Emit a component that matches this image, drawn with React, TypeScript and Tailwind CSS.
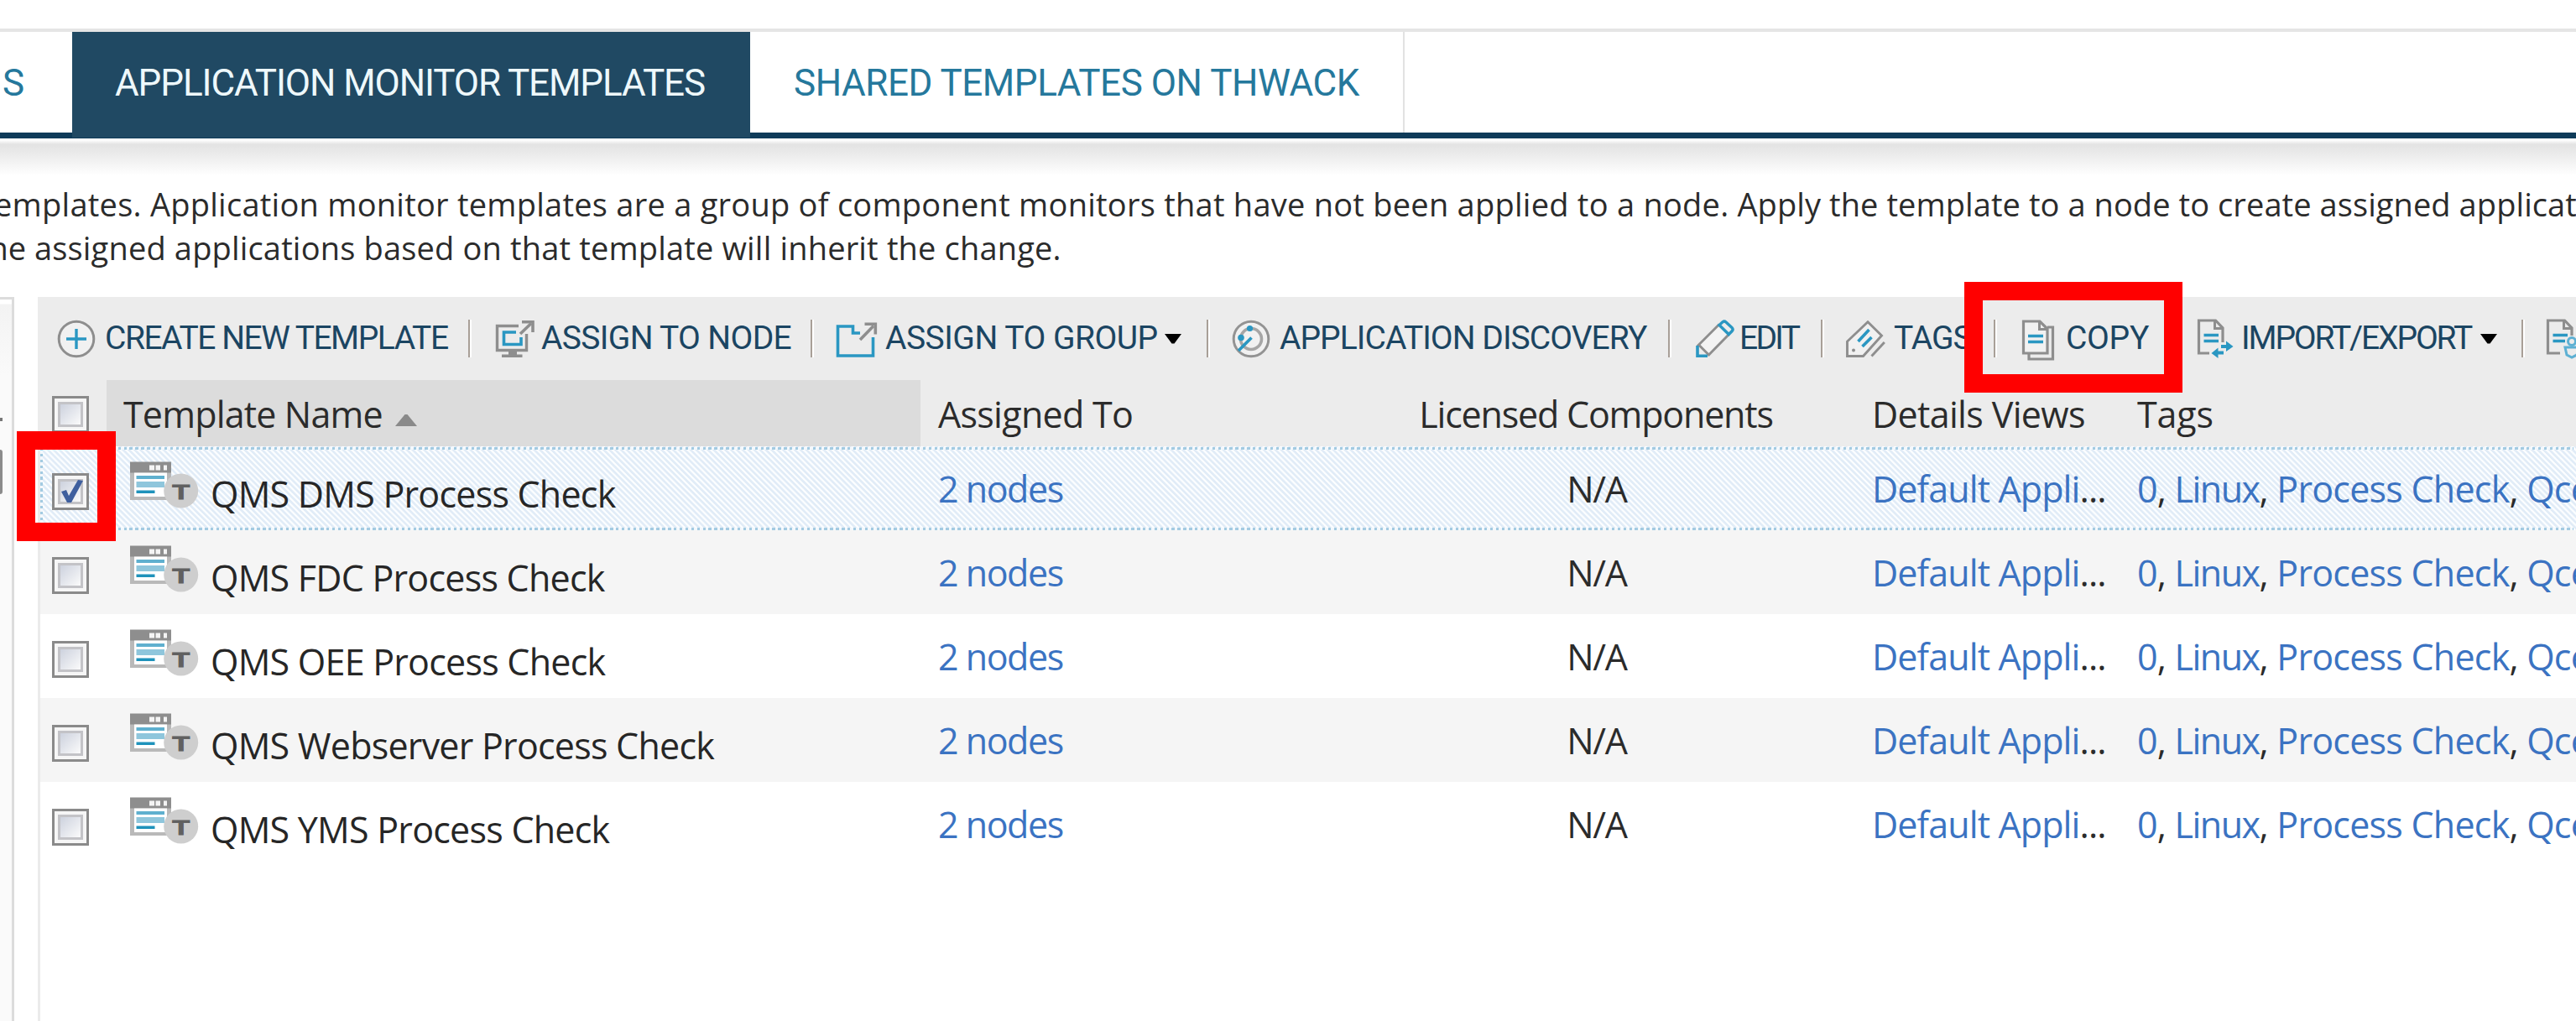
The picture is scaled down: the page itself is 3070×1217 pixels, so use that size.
import React from "react";

const GREY = "#8e8e8e";
const BLUE = "#2a97c2";

function CreateIcon() {
  return (
    <svg className="shrink-0" width="46" height="46" viewBox="0 0 46 46" fill="none">
      <circle cx="23" cy="23" r="20.8" fill="#f1f1f1" stroke={GREY} strokeWidth="3" />
      <path d="M23 11V35M11 23H35" stroke={BLUE} strokeWidth="3.4" />
    </svg>
  );
}

function NodeIcon() {
  return (
    <svg className="shrink-0" width="48" height="46" viewBox="0 0 48 46" fill="none">
      <path d="M28 7.5H2.5V36.5H37.5V17" stroke={GREY} strokeWidth="3.4" />
      <path d="M25 15H10.5V29.5H31V21" stroke={BLUE} strokeWidth="3.6" />
      <path d="M16 38H26V41.5H32.5V45H8V41.5H16Z" fill={GREY} />
      <path d="M30 17L43 4.5" stroke={GREY} strokeWidth="3.6" />
      <path d="M32 2.7H45V15" stroke={GREY} strokeWidth="3.6" />
    </svg>
  );
}

function GroupIcon() {
  return (
    <svg className="shrink-0" width="50" height="46" viewBox="0 0 50 46" fill="none">
      <path d="M29 16H20.5V8H2.5V43H44.5V21" stroke={BLUE} strokeWidth="3.6" />
      <path d="M29 24L45 7.5" stroke={GREY} strokeWidth="3.6" />
      <path d="M34.5 5.3H47.3V17.5" stroke={GREY} strokeWidth="3.6" />
    </svg>
  );
}

function DiscoveryIcon() {
  return (
    <svg className="shrink-0" width="46" height="46" viewBox="0 0 46 46" fill="none">
      <circle cx="23" cy="23" r="20.8" fill="#f1f1f1" stroke="#939393" strokeWidth="3" />
      <circle cx="23" cy="23" r="12.5" stroke="#a6a6a6" strokeWidth="3.6" />
      <path d="M8 37L23.5 21.5" stroke={BLUE} strokeWidth="3.8" />
      <circle cx="21.5" cy="10.5" r="3.6" fill={BLUE} />
      <circle cx="11" cy="21.5" r="3.8" fill={BLUE} />
    </svg>
  );
}

function EditIcon() {
  return (
    <svg className="shrink-0" width="48" height="46" viewBox="0 0 48 46" fill="none">
      <path d="M4 31L28 6.5L40 18L16 42.5Z" fill="#f3f3f3" />
      <path d="M3 31.5L29 5.5M15.5 43L40.5 17.5M5 30.5L16.5 42" stroke={GREY} strokeWidth="3" />
      <path d="M3 31V43.3H15" stroke={BLUE} strokeWidth="3.6" />
      <path d="M29 6.5L33 2.8Q35 1.3 37 3L44 9.5Q46 11.5 44.3 13.5L40.3 17.5Z" stroke={BLUE} strokeWidth="3.4" />
    </svg>
  );
}

function TagIcon() {
  return (
    <svg className="shrink-0" width="48" height="46" viewBox="0 0 48 46" fill="none">
      <path d="M2.5 43.5V26L27 2.8L43.5 19L21.5 43.5Z" fill="#f1f1f1" stroke={GREY} strokeWidth="2.9" />
      <path d="M46.8 27L31.5 43.5" stroke={GREY} strokeWidth="2.9" />
      <circle cx="10" cy="36.5" r="2" fill={GREY} />
      <path d="M28.5 12L15.5 26M31.5 21L20.5 32" stroke={BLUE} strokeWidth="3.6" />
    </svg>
  );
}

function CopyIcon() {
  return (
    <svg className="mt-[3px] shrink-0" width="40" height="49" viewBox="0 0 40 49" fill="none">
      <path d="M9 40V47H37.5V9H31" stroke={GREY} strokeWidth="3.2" />
      <path d="M2.5 2H22L31 11V40H2.5Z" fill="#f1f1f1" stroke={GREY} strokeWidth="3.2" />
      <path d="M21.5 2V11.5H31" stroke={GREY} strokeWidth="3" />
      <path d="M8 19.5H26M8 26.5H26" stroke={BLUE} strokeWidth="3.4" />
    </svg>
  );
}

function ImportExportIcon() {
  return (
    <svg className="shrink-0" width="45" height="48" viewBox="0 0 45 48" fill="none">
      <path d="M15 41H2.5V2H22.5L31 11V28" stroke={GREY} strokeWidth="3.2" />
      <path d="M21.5 2V11.5H31" stroke={GREY} strokeWidth="3" />
      <path d="M8.5 19.5H26M8.5 26.5H26" stroke={BLUE} strokeWidth="3.4" />
      <path d="M29 31H35V26.5L43.5 33L35 39V35H29ZM32 38.5H25.5V34.5L17.5 41L25.5 47V42.5H32Z" fill={BLUE} />
    </svg>
  );
}

function ThwackIcon() {
  return (
    <svg className="shrink-0" width="45" height="48" viewBox="0 0 45 48" fill="none">
      <path d="M17 41H2.5V2H22.5L31 11V20" stroke={GREY} strokeWidth="3.2" />
      <path d="M21.5 2V11.5H31" stroke={GREY} strokeWidth="3" />
      <path d="M8.5 19.5H26M8.5 26.5H23" stroke={BLUE} strokeWidth="3.4" />
      <circle cx="31" cy="27" r="4.5" stroke="#5db0d3" strokeWidth="3" />
      <path d="M23 34H39L37 43L31 46L25 43Z" stroke="#5db0d3" strokeWidth="3" />
    </svg>
  );
}

function TemplateIcon() {
  return (
    <svg className="shrink-0" width="84" height="58" viewBox="0 0 84 58">
      <rect x="1" y="2" width="49" height="44" fill="#b9b9b9" />
      <rect x="1" y="0.5" width="49" height="13" fill={GREY} />
      <rect x="6" y="13.5" width="39" height="28.5" fill="#fff" />
      <rect x="24" y="4.5" width="6" height="6" fill="#f4f4f4" />
      <rect x="31.5" y="4.5" width="5.5" height="6" fill="#f4f4f4" />
      <rect x="41" y="4.5" width="4" height="6" fill="#f4f4f4" />
      <rect x="8.5" y="17" width="33.5" height="4" fill="#5fb0cf" />
      <rect x="8.5" y="24" width="33.5" height="7" fill="#8fc6dc" />
      <rect x="8.5" y="34.5" width="22" height="3.5" fill="#1f92bb" />
      <circle cx="61.7" cy="35" r="20.5" fill="#cecece" />
      <text x="51.2" y="44.8" fontFamily="Liberation Sans, sans-serif" fontWeight="700" fontSize="24" textLength="21" lengthAdjust="spacingAndGlyphs" fill="#606060" stroke="#606060" strokeWidth="0.8">T</text>
    </svg>
  );
}

function Caret() {
  return (
    <svg className="shrink-0" width="20" height="12" viewBox="0 0 20 12">
      <path d="M0 0H20L11.5 11.5H8.5Z" fill="#000" />
    </svg>
  );
}

function Separator() {
  return <div className="h-[45px] w-[4px] shrink-0 border-r-2 border-white bg-[#a89f97]" />;
}

function Checkbox({ checked = false }: { checked?: boolean }) {
  return (
    <div className="flex h-[44px] w-[44px] shrink-0 items-center justify-center border-[3px] border-[#8a8a8a] bg-[#f6f6f6]">
      <div className="relative h-[30px] w-[30px] border-[3px] border-[#c3c3c7] bg-linear-to-br from-[#cdd2de] to-[#fbfbfb]">
        {checked && (
          <svg className="absolute -top-[5px] -left-[1px]" width="32" height="36" viewBox="0 0 32 36">
            <path d="M2 17L8 15L11 22L22 3L28 4L14 30H9Z" fill="#3f5f9e" />
          </svg>
        )}
      </div>
    </div>
  );
}

function Label({ className, children }: { className: string; children: React.ReactNode }) {
  return <span className={`shrink-0 whitespace-nowrap text-[39px] text-[#1b4562] ${className}`}>{children}</span>;
}

function Toolbar() {
  return (
    <div className="flex h-[99px] items-center overflow-hidden pl-[23px] font-['Roboto',sans-serif]">
      <CreateIcon />
      <Label className="ml-[11px] w-[433px] tracking-[-1.5px]">CREATE NEW TEMPLATE</Label>
      <Separator />
      <div className="w-[28px] shrink-0" />
      <NodeIcon />
      <Label className="ml-[7px] w-[321px] tracking-[-0.66px]">ASSIGN TO NODE</Label>
      <Separator />
      <div className="w-[26px] shrink-0" />
      <GroupIcon />
      <Label className="ml-[9px] w-[333px] tracking-[-0.5px]">ASSIGN TO GROUP</Label>
      <Caret />
      <div className="w-[30px] shrink-0" />
      <Separator />
      <div className="w-[26px] shrink-0" />
      <DiscoveryIcon />
      <Label className="ml-[11px] w-[463px] tracking-[-0.96px]">APPLICATION DISCOVERY</Label>
      <Separator />
      <div className="w-[28px] shrink-0" />
      <EditIcon />
      <Label className="ml-[5px] w-[97px] tracking-[-2.7px]">EDIT</Label>
      <Separator />
      <div className="w-[25px] shrink-0" />
      <TagIcon />
      <Label className="ml-[10px] w-[119px] tracking-[-1px]">TAGS</Label>
      <Separator />
      <div className="w-[29px] shrink-0" />
      <CopyIcon />
      <Label className="ml-[13px] w-[156px] tracking-[-0.3px]">COPY</Label>
      <ImportExportIcon />
      <Label className="ml-[8px] w-[285px] tracking-[-2.13px]">IMPORT/EXPORT</Label>
      <Caret />
      <div className="w-[29px] shrink-0" />
      <Separator />
      <div className="w-[25px] shrink-0" />
      <ThwackIcon />
    </div>
  );
}

const GRID = "grid grid-cols-[82px_970px_500px_616px_315px_minmax(0,1fr)]";

function TableHeader() {
  return (
    <div className={`${GRID} h-[79px] whitespace-nowrap leading-[81px]`}>
      <div className="flex items-center pl-[17px]">
        <Checkbox />
      </div>
      <div className="flex items-center bg-[#dcdcdc] pl-[20px]">
        <span className="tracking-[-0.83px]">Template Name</span>
        <svg className="mt-[14px] ml-[15px]" width="26" height="14" viewBox="0 0 26 14">
          <path d="M0 14L11.5 0H14.5L26 14Z" fill="#8a8a8a" />
        </svg>
      </div>
      <div className="pl-[21px] tracking-[-0.7px]">Assigned To</div>
      <div className="pr-[6px] text-center tracking-[-1.2px]">Licensed Components</div>
      <div className="pl-[18px] tracking-[-0.66px]">Details Views</div>
      <div className="pl-[19px] tracking-[-0.14px]">Tags</div>
    </div>
  );
}

function DottedLine({ className }: { className: string }) {
  return (
    <div
      className={`absolute inset-x-[3px] h-[3.4px] bg-[repeating-linear-gradient(90deg,#a3cbe2_0px,#a3cbe2_3.4px,#f4f8fc_3.4px,#f4f8fc_6.9px)] ${className}`}
    />
  );
}

const LINK = "text-[#3b73c2]";

function Row({ name, background, selected = false }: { name: string; background: string; selected?: boolean }) {
  return (
    <div className={`${GRID} relative h-[100px] whitespace-nowrap border-l-[3px] border-[#ebebeb] leading-[102px] ${background}`}>
      {selected && (
        <>
          <DottedLine className="top-[1px]" />
          <DottedLine className="bottom-0" />
          <div className="absolute inset-y-[2px] left-0 w-[3.4px] bg-[repeating-linear-gradient(180deg,#a3cbe2_0px,#a3cbe2_3.4px,#f4f8fc_3.4px,#f4f8fc_6.9px)]" />
        </>
      )}
      <div className="-ml-[3px] flex items-start pt-[32px] pl-[17px]">
        <Checkbox checked={selected} />
      </div>
      <div className="-ml-[3px] flex items-start pl-[27px]">
        <div className="pt-[18px]">
          <TemplateIcon />
        </div>
        <span className="ml-[13px] pt-[6px] tracking-[-0.76px] text-[#262626]">{name}</span>
      </div>
      <div className={`-ml-[3px] pl-[21px] tracking-[-1.47px] ${LINK}`}>2 nodes</div>
      <div className="-ml-[3px] pr-[7px] text-center tracking-[-1.3px]">N/A</div>
      <div className="-ml-[3px] pl-[18px] tracking-[-0.88px]">
        <span className={LINK}>Default Appli</span>...
      </div>
      <div className="-ml-[3px] pl-[19px] tracking-[-0.8px]">
        <span className={LINK}>0</span>, <span className={`tracking-[-1.5px] ${LINK}`}>Linux</span>, <span className={`tracking-[-0.75px] ${LINK}`}>Process Check</span>, <span className={LINK}>Qce</span>
      </div>
    </div>
  );
}

export default function App() {
  return (
    <div className="relative flex h-[1217px] w-[3070px] flex-col overflow-hidden bg-white font-['Open_Sans',sans-serif] text-[43px] text-[#2b2b2b]">
      <div className="h-[34px] shrink-0" />
      <nav className="h-[131px] shrink-0 border-t-4 border-b-[7px] border-t-[#e5e5e5] border-b-[#0e3b59] font-['Roboto',sans-serif] text-[44px] text-[#25789c]">
        <div className="flex h-[120px] whitespace-nowrap leading-[123px]">
          <div className="w-[86px] shrink-0 pl-[3px]">S</div>
          <div className="-mb-[6px] h-[126px] w-[808px] shrink-0 bg-[#204963] pl-[51px] tracking-[-1.09px] text-[#eef8fb]">APPLICATION MONITOR TEMPLATES</div>
          <div className="w-[780px] shrink-0 border-r-2 border-[#e2e2e2] pl-[52px] tracking-[-0.45px]">SHARED TEMPLATES ON THWACK</div>
        </div>
      </nav>
      <div className="mt-[2px] h-[42px] shrink-0 bg-[linear-gradient(180deg,#ffffff_0%,#e3e3e3_12%,#ebebeb_40%,#ffffff_100%)]" />
      <div className="mt-[8px] shrink-0 text-[38px] leading-[52px]">
        <div className="flex whitespace-pre">
          <div className="flex w-[179px] shrink-0 justify-end tracking-[0.27px]">emplates. </div>
          <div className="tracking-[0.25px]">
            Application monitor templates are a group of component monitors that have not been applied to a node. <span className="tracking-[0.08px]">Apply the template to a node to create assigned applicat</span>
          </div>
        </div>
        <div className="flex whitespace-pre">
          <div className="flex w-[41px] shrink-0 justify-end">ne </div>
          <div className="tracking-[0.17px]">assigned applications based on that template will inherit the change.</div>
        </div>
      </div>

      <div className="mt-[33px] flex min-h-0 flex-1">
        <aside className="w-[17px] shrink-0 border-t-[3px] border-r-[3px] border-[#dcdcdc] bg-[linear-gradient(180deg,#ffffff_0px,#ffffff_5px,#f3f3f3_6px,#fafafa_90px)]">
          <div className="mt-[141px] h-[4px] w-[3px] bg-[#777]" />
          <div className="mt-[34px] h-[53px] w-[3px] rounded-r-[3px] bg-[#8b8b8b]" />
        </aside>
        <main className="ml-[28px] flex min-w-0 flex-1 flex-col">
          <div className="bg-[#ececec]">
            <Toolbar />
            <TableHeader />
          </div>
          <Row
            name="QMS DMS Process Check"
            selected
            background="bg-[repeating-linear-gradient(45deg,#e1ecf7_0px,#e1ecf7_1.9px,#fbfdff_2.6px,#fbfdff_4.2px,#e1ecf7_4.88px)]"
          />
          <Row name="QMS FDC Process Check" background="bg-[#f5f5f5]" />
          <Row name="QMS OEE Process Check" background="bg-white" />
          <Row name="QMS Webserver Process Check" background="bg-[#f5f5f5]" />
          <Row name="QMS YMS Process Check" background="bg-white" />
          <div className="flex-1 border-l-[3px] border-[#ebebeb]" />
        </main>
      </div>

      <div className="absolute top-[336px] left-[2341px] h-[132px] w-[260px] border-[22px] border-[#ff0000]" />
      <div className="absolute top-[514px] left-[20px] h-[131px] w-[118px] border-[22px] border-[#ff0000]" />
    </div>
  );
}
